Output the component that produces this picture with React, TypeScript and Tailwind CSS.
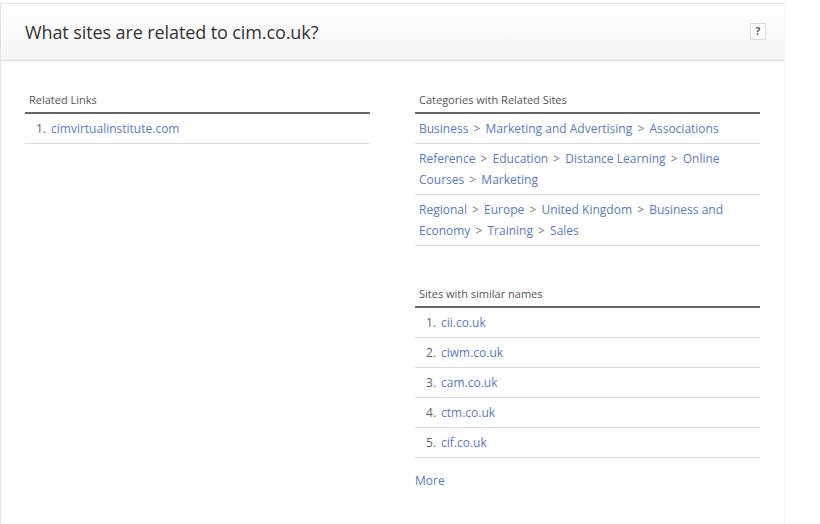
import React from "react";

const link = "text-[#5a79c1]";

function Label({ children }: { children: React.ReactNode }) {
  return (
    <div className="px-[4px] pb-[4px] text-[11px] leading-[16px] text-[#555] border-b-2 border-[#666]">
      {children}
    </div>
  );
}

function Cat({ parts }: { parts: string[] }) {
  return (
    <div className="px-[4px] py-[4px] text-[12px] leading-[21px] border-b border-[#ddd]">
      {parts.map((p, i) => (
        <React.Fragment key={i}>
          {i > 0 && (
            <>
              {" "}
              <span className="text-[#777] mx-[2px]">&gt;</span>{" "}
            </>
          )}
          {p.split(" ").map((w, j) => (
            <React.Fragment key={j}>
              {j > 0 && " "}
              <a className={link}>{w}</a>
            </React.Fragment>
          ))}
        </React.Fragment>
      ))}
    </div>
  );
}

function Item({ n, text }: { n: number; text: string }) {
  return (
    <div className="pl-[11px] py-[4px] text-[12px] leading-[21px] border-b border-[#ddd]">
      <span className="text-[#666] mr-[5px]">{n}.</span>
      <a className={link}>{text}</a>
    </div>
  );
}

export default function App() {
  return (
    <div
      className="w-[820px] h-[524px] bg-white pt-[3px] overflow-hidden"
      style={{ fontFamily: '"Open Sans", "Noto Sans", sans-serif' }}
    >
      <div className="w-[785px] h-[530px] border-l border-t border-r border-[#e3e3e3] border-r-[#f4f4f4]">
        <div className="h-[57px] flex items-center justify-between pl-[24px] pr-[18px] border-b border-[#dcdcdc] bg-gradient-to-b from-white to-[#f5f5f5]">
          <h1 className="text-[18px] text-[#333] font-normal tracking-[-0.1px]">
            What sites are related to cim.co.uk?
          </h1>
          <div className="w-[16px] h-[17px] border border-[#ddd] bg-white flex items-center justify-center text-[10px] font-bold text-[#555] mb-[2px]">
            ?
          </div>
        </div>
        <div className="flex gap-[45px] pl-[24px] pt-[31px]">
          <div className="w-[345px]">
            <Label>Related Links</Label>
            <Item n={1} text="cimvirtualinstitute.com" />
          </div>
          <div className="w-[345px]">
            <Label>Categories with Related Sites</Label>
            <Cat parts={["Business", "Marketing and Advertising", "Associations"]} />
            <Cat parts={["Reference", "Education", "Distance Learning", "Online Courses", "Marketing"]} />
            <Cat parts={["Regional", "Europe", "United Kingdom", "Business and Economy", "Training", "Sales"]} />
            <div className="mt-[40px]">
              <Label>Sites with similar names</Label>
              <Item n={1} text="cii.co.uk" />
              <Item n={2} text="ciwm.co.uk" />
              <Item n={3} text="cam.co.uk" />
              <Item n={4} text="ctm.co.uk" />
              <Item n={5} text="cif.co.uk" />
            </div>
            <div className="mt-[12px] text-[12px] leading-[21px]">
              <a className={link}>More</a>
            </div>
          </div>
        </div>
      </div>
    </div>
  );
}
